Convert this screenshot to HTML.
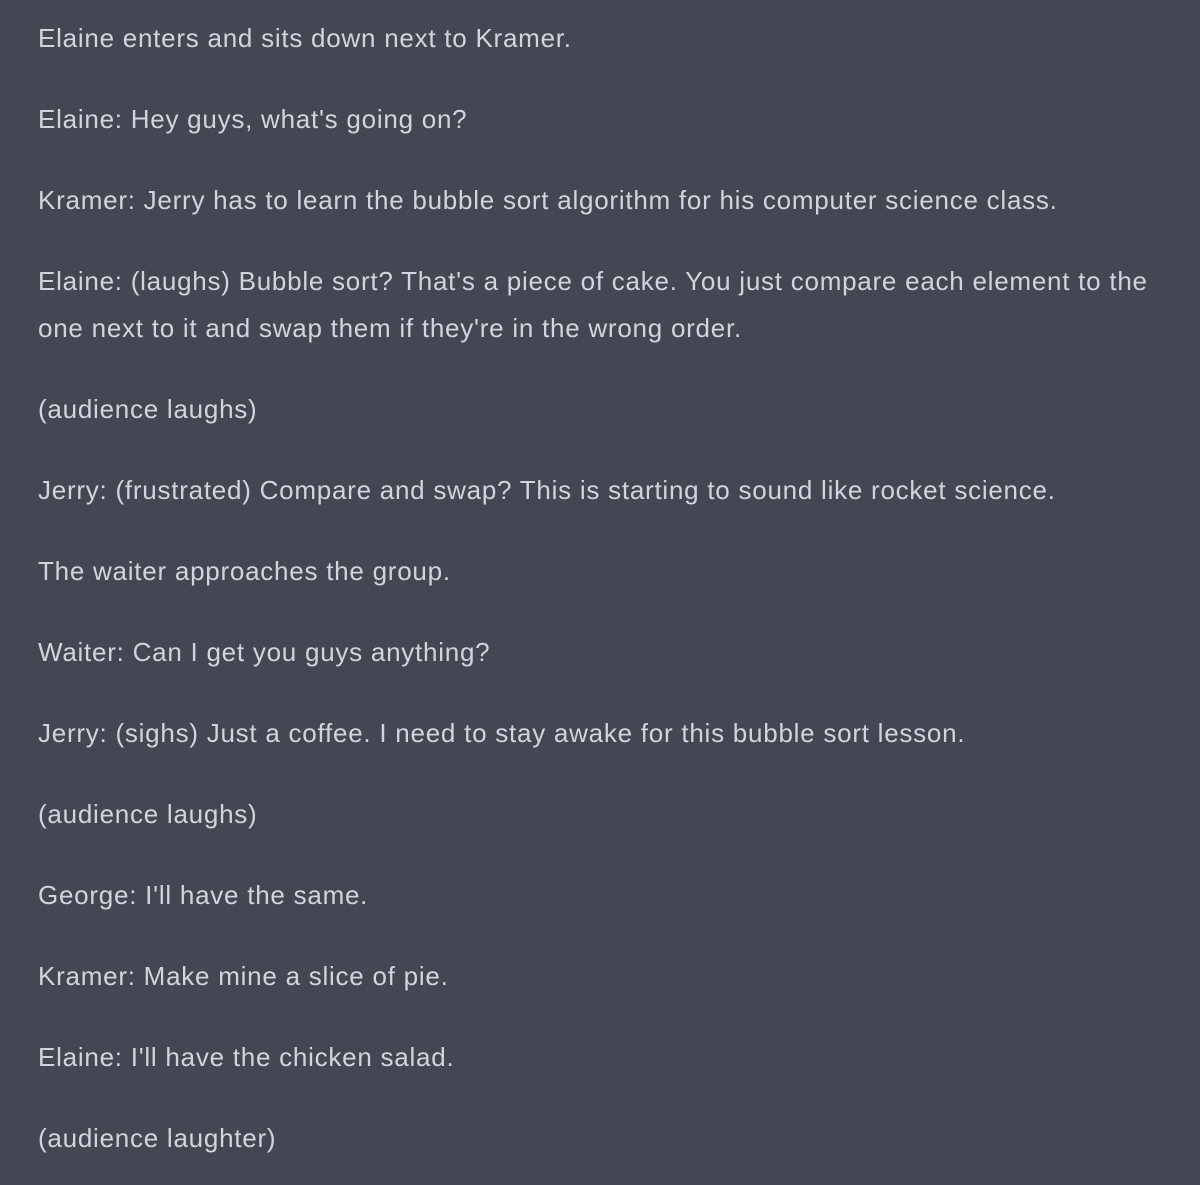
<!DOCTYPE html>
<html><head><meta charset="utf-8"><style>
html,body{margin:0;padding:0;background:#444654;width:1200px;height:1185px;overflow:hidden}
body{font-family:"Liberation Sans",Helvetica,Arial,sans-serif;font-size:26px;line-height:47px;color:#d1d5db;letter-spacing:0.75px}
.c{padding:15px 38px 0 38px;width:1124px}
p{margin:0 0 34px 0}
</style></head><body><div class="c">
<p>Elaine enters and sits down next to Kramer.</p>
<p>Elaine: Hey guys, what's going on?</p>
<p>Kramer: Jerry has to learn the bubble sort algorithm for his computer science class.</p>
<p>Elaine: (laughs) Bubble sort? That's a piece of cake. You just compare each element to the one next to it and swap them if they're in the wrong order.</p>
<p>(audience laughs)</p>
<p>Jerry: (frustrated) Compare and swap? This is starting to sound like rocket science.</p>
<p>The waiter approaches the group.</p>
<p>Waiter: Can I get you guys anything?</p>
<p>Jerry: (sighs) Just a coffee. I need to stay awake for this bubble sort lesson.</p>
<p>(audience laughs)</p>
<p>George: I'll have the same.</p>
<p>Kramer: Make mine a slice of pie.</p>
<p>Elaine: I'll have the chicken salad.</p>
<p>(audience laughter)</p>
</div></body></html>
